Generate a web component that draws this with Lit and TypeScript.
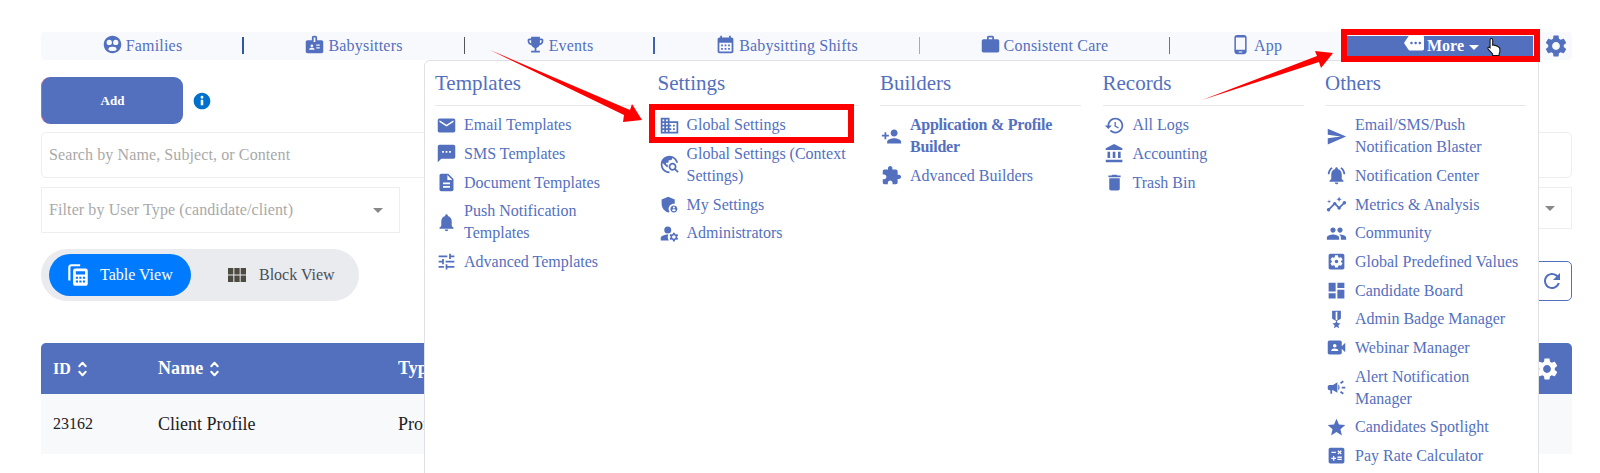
import { LitElement, html, css, svg } from "lit";
import { customElement } from "lit/decorators.js";

const P: Record<string, string> = {
  email: "M20 4H4c-1.1 0-2 .9-2 2v12c0 1.1.9 2 2 2h16c1.1 0 2-.9 2-2V6c0-1.1-.9-2-2-2zm0 4l-8 5-8-5V6l8 5 8-5v2z",
  sms: "M20 2H4c-1.1 0-1.99.9-1.99 2L2 22l4-4h14c1.1 0 2-.9 2-2V4c0-1.1-.9-2-2-2zM9 11H7V9h2v2zm4 0h-2V9h2v2zm4 0h-2V9h2v2z",
  doc: "M14 2H6c-1.1 0-1.99.9-1.99 2L4 20c0 1.1.89 2 1.99 2H18c1.1 0 2-.9 2-2V8l-6-6zm2 16H8v-2h8v2zm0-4H8v-2h8v2zm-3-5V3.5L18.5 9H13z",
  bell: "M12 22c1.1 0 2-.9 2-2h-4c0 1.1.89 2 2 2zm6-6v-5c0-3.07-1.64-5.64-4.5-6.32V4c0-.83-.67-1.5-1.5-1.5s-1.5.67-1.5 1.5v.68C7.63 5.36 6 7.92 6 11v5l-2 2v1h16v-1l-2-2z",
  tune: "M3 17v2h6v-2H3zM3 5v2h10V5H3zm10 16v-2h8v-2h-8v-2h-2v6h2zM7 9v2H3v2h4v2h2V9H7zm14 4v-2H11v2h10zm-6-4h2V7h4V5h-4V3h-2v6z",
  domain: "M12 7V3H2v18h20V7H12zM6 19H4v-2h2v2zm0-4H4v-2h2v2zm0-4H4V9h2v2zm0-4H4V5h2v2zm4 12H8v-2h2v2zm0-4H8v-2h2v2zm0-4H8V9h2v2zm0-4H8V5h2v2zm10 12h-8v-2h2v-2h-2v-2h2v-2h-2V9h8v10zm-2-8h-2v2h2v-2zm0 4h-2v2h2v-2z",
  travel: "M19.3 16.9c.4-.7.7-1.5.7-2.4 0-2.5-2-4.5-4.5-4.5S11 12 11 14.5s2 4.5 4.5 4.5c.9 0 1.7-.3 2.4-.7l3.2 3.2 1.4-1.4-3.2-3.2zm-3.8.1c-1.4 0-2.5-1.1-2.5-2.5s1.1-2.5 2.5-2.5 2.5 1.1 2.5 2.5-1.1 2.5-2.5 2.5zM12 20v2C6.48 22 2 17.52 2 12S6.48 2 12 2c4.84 0 8.87 3.44 9.8 8h-2.07c-.64-2.46-2.4-4.47-4.73-5.41V5c0 1.1-.9 2-2 2h-2v2c0 .55-.45 1-1 1H8v2h2v3H9l-4.79-4.79C4.08 10.79 4 11.38 4 12c0 4.41 3.59 8 8 8z",
  shield: "M17 11c.34 0 .67.04 1 .09V6.27L10.5 3 3 6.27v4.91c0 4.54 3.2 8.79 7.5 9.82.55-.13 1.08-.32 1.6-.55-.69-.98-1.1-2.17-1.1-3.45 0-3.31 2.69-6 6-6zM17 13c-2.21 0-4 1.79-4 4s1.79 4 4 4 4-1.79 4-4-1.79-4-4-4zm0 1.38c.62 0 1.12.51 1.12 1.12s-.51 1.12-1.12 1.12-1.12-.51-1.12-1.12.5-1.12 1.12-1.12zm0 5.37c-.93 0-1.74-.46-2.24-1.17.05-.72 1.51-1.08 2.24-1.08s2.19.36 2.24 1.08c-.5.71-1.31 1.17-2.24 1.17z",
  admins: "M10.67 13.02c-.22-.01-.44-.02-.67-.02-2.42 0-4.68.67-6.61 1.82-.88.52-1.39 1.5-1.39 2.53V20h9.26c-.79-1.13-1.26-2.51-1.26-4 0-1.07.25-2.07.67-2.98zM10 12a4 4 0 1 0 0-8 4 4 0 0 0 0 8zM20.75 16c0-.22-.03-.42-.06-.63l1.14-1.01-1-1.73-1.45.49c-.32-.27-.68-.48-1.08-.63L18 11h-2l-.3 1.49c-.4.15-.76.36-1.08.63l-1.45-.49-1 1.73 1.14 1.01c-.03.21-.06.41-.06.63s.03.42.06.63l-1.14 1.01 1 1.73 1.45-.49c.32.27.68.48 1.08.63L16 21h2l.3-1.49c.4-.15.76-.36 1.08-.63l1.45.49 1-1.73-1.14-1.01c.03-.21.06-.41.06-.63zM17 18c-1.1 0-2-.9-2-2s.9-2 2-2 2 .9 2 2-.9 2-2 2z",
  personAdd: "M15 12c2.21 0 4-1.79 4-4s-1.79-4-4-4-4 1.79-4 4 1.79 4 4 4zm-9-2V7H4v3H1v2h3v3h2v-3h3v-2H6zm9 4c-2.67 0-8 1.34-8 4v2h16v-2c0-2.66-5.33-4-8-4z",
  puzzle: "M20.5 11H19V7c0-1.1-.9-2-2-2h-4V3.5C13 2.12 11.88 1 10.5 1S8 2.12 8 3.5V5H4c-1.1 0-1.99.9-1.99 2v3.8H3.5c1.49 0 2.7 1.21 2.7 2.7s-1.21 2.7-2.7 2.7H2V20c0 1.1.9 2 2 2h3.8v-1.5c0-1.49 1.21-2.7 2.7-2.7 1.49 0 2.7 1.21 2.7 2.7V22H17c1.1 0 2-.9 2-2v-4h1.5c1.38 0 2.5-1.12 2.5-2.5S21.88 11 20.5 11z",
  history: "M13 3c-4.97 0-9 4.03-9 9H1l3.89 3.89.07.14L9 12H6c0-3.87 3.13-7 7-7s7 3.13 7 7-3.13 7-7 7c-1.93 0-3.68-.79-4.94-2.06l-1.42 1.42C8.27 19.99 10.51 21 13 21c4.97 0 9-4.03 9-9s-4.03-9-9-9zm-1 5v5l4.28 2.54.72-1.21-3.5-2.08V8H12z",
  bank: "M4 10v7h3v-7H4zm6 0v7h3v-7h-3zM2 22h19v-3H2v3zm14-12v7h3v-7h-3zm-4.5-9L2 6v2h19V6l-9.5-5z",
  trash: "M6 19c0 1.1.9 2 2 2h8c1.1 0 2-.9 2-2V7H6v12zM19 4h-3.5l-1-1h-5l-1 1H5v2h14V4z",
  send: "M2.01 21L23 12 2.01 3 2 10l15 2-15 2z",
  bellActive: "M7.58 4.08L6.15 2.65C3.75 4.48 2.17 7.3 2.03 10.5h2c.15-2.65 1.51-4.97 3.55-6.42zm12.39 6.42h2c-.15-3.2-1.73-6.02-4.12-7.85l-1.42 1.43c2.02 1.45 3.39 3.77 3.54 6.42zM18 11c0-3.07-1.64-5.64-4.5-6.32V4c0-.83-.67-1.5-1.5-1.5s-1.5.67-1.5 1.5v.68C7.63 5.36 6 7.92 6 11v5l-2 2v1h16v-1l-2-2v-5zm-6 11c.14 0 .27-.01.4-.04.65-.14 1.18-.58 1.44-1.18.1-.24.15-.5.15-.78h-4c.01 1.1.9 2 2.01 2z",
  insights: "M21 8c-1.45 0-2.26 1.44-1.93 2.51l-3.55 3.56c-.3-.09-.74-.09-1.04 0l-2.55-2.55C12.27 10.45 11.46 9 10 9c-1.45 0-2.27 1.44-1.93 2.52l-4.56 4.55C2.44 15.74 1 16.55 1 18c0 1.1.9 2 2 2 1.45 0 2.26-1.44 1.93-2.51l4.55-4.56c.3.09.74.09 1.04 0l2.55 2.55C12.73 16.55 13.54 18 15 18c1.45 0 2.27-1.44 1.93-2.52l3.56-3.55c1.07.33 2.51-.48 2.51-1.93 0-1.1-.9-2-2-2zM15 9l.94-2.07L18 6l-2.06-.93L15 3l-.92 2.07L12 6l2.08.93zM3.5 11L4 9l2-.5L4 8l-.5-2L3 8l-2 .5L3 9z",
  people: "M16 11c1.66 0 2.99-1.34 2.99-3S17.66 5 16 5c-1.66 0-3 1.34-3 3s1.34 3 3 3zm-8 0c1.66 0 2.99-1.34 2.99-3S9.66 5 8 5C6.34 5 5 6.34 5 8s1.34 3 3 3zm0 2c-2.33 0-7 1.17-7 3.5V19h14v-2.5c0-2.33-4.67-3.5-7-3.5zm8 0c-.29 0-.62.02-.97.05 1.16.84 1.97 1.97 1.97 3.45V19h6v-2.5c0-2.33-4.67-3.5-7-3.5z",
  appSettings: "M12 10c-1.1 0-2 .9-2 2s.9 2 2 2 2-.9 2-2-.9-2-2-2zm7-7H5c-1.11 0-2 .9-2 2v14c0 1.1.89 2 2 2h14c1.11 0 2-.9 2-2V5c0-1.1-.89-2-2-2zm-1.75 9c0 .23-.02.46-.05.68l1.48 1.16c.13.11.17.3.08.45l-1.4 2.42c-.09.15-.27.21-.43.15l-1.74-.7c-.36.28-.76.51-1.18.69l-.26 1.85c-.03.17-.18.3-.35.3h-2.8c-.17 0-.32-.13-.35-.29l-.26-1.85c-.43-.18-.82-.41-1.18-.69l-1.74.7c-.16.06-.34 0-.43-.15l-1.4-2.42c-.09-.15-.05-.34.08-.45l1.48-1.16c-.03-.23-.05-.46-.05-.69 0-.23.02-.46.05-.68l-1.48-1.16c-.13-.11-.17-.3-.08-.45l1.4-2.42c.09-.15.27-.21.43-.15l1.74.7c.36-.28.76-.51 1.18-.69l.26-1.85c.03-.17.18-.3.35-.3h2.8c.17 0 .32.13.35.29l.26 1.85c.43.18.82.41 1.18.69l1.74-.7c.16-.06.34 0 .43.15l1.4 2.42c.09.15.05.34-.08.45l-1.48 1.16c.03.23.05.46.05.69z",
  dash: "M3 13h8V3H3v10zm0 8h8v-6H3v6zm10 0h8V11h-8v10zm0-18v6h8V3h-8z",
  medal: "M17 10.43V2H7v8.43c0 .35.18.68.49.86l4.18 2.51-.99 2.34-3.41.29 2.59 2.24L9.07 22 12 20.23 14.93 22l-.78-3.33 2.59-2.24-3.41-.29-.99-2.34 4.18-2.51c.3-.18.48-.5.48-.86zm-4 1.8l-1 .6-1-.6V3h2v9.23z",
  video: "M18 10.48V6c0-1.1-.9-2-2-2H4c-1.1 0-2 .9-2 2v12c0 1.1.9 2 2 2h12c1.1 0 2-.9 2-2v-4.48l4 3.98v-11l-4 3.98zM10 8c1.1 0 2 .9 2 2s-.9 2-2 2-2-.9-2-2 .9-2 2-2zm4 8H6v-.57c0-.81.48-1.53 1.22-1.85.85-.37 1.79-.58 2.78-.58.99 0 1.93.21 2.78.58.74.32 1.22 1.04 1.22 1.85V16z",
  campaign: "M18 11v2h4v-2h-4zm-2 6.61c.96.71 2.21 1.65 3.2 2.39.4-.53.8-1.07 1.2-1.6-.99-.74-2.24-1.68-3.2-2.4-.4.54-.8 1.08-1.2 1.61zM20.4 5.6c-.4-.53-.8-1.07-1.2-1.6-.99.74-2.24 1.68-3.2 2.4.4.53.8 1.07 1.2 1.6.96-.72 2.21-1.65 3.2-2.4zM4 9c-1.1 0-2 .9-2 2v2c0 1.1.9 2 2 2h1v4h2v-4h1l5 3V6L8 9H4zm11.5 3c0-1.33-.58-2.53-1.5-3.35v6.69c.92-.81 1.5-2.01 1.5-3.34z",
  star: "M12 17.27L18.18 21l-1.64-7.03L22 9.24l-7.19-.61L12 2 9.19 8.63 2 9.24l5.46 4.73L5.82 21z",
  calc: "M19 3H5c-1.1 0-2 .9-2 2v14c0 1.1.9 2 2 2h14c1.1 0 2-.9 2-2V5c0-1.1-.9-2-2-2zm-5.97 4.06L14.09 6l1.41 1.41L16.91 6l1.06 1.06-1.41 1.41 1.41 1.41-1.06 1.06-1.41-1.4-1.41 1.41-1.06-1.06 1.41-1.41-1.41-1.42zm-6.78.66h5v1.5h-5v-1.5zM11.5 16h-2v2H8v-2H6v-1.5h2v-2h1.5v2h2V16zm6.5 1.25h-5v-1.5h5v1.5zm0-2.5h-5v-1.5h5v1.5z",
  face: "M12 2C6.48 2 2 6.48 2 12s4.48 10 10 10 10-4.48 10-10S17.52 2 12 2zM8.300 6.600a3 3 0 1 1 0 6 3 3 0 1 1 0-6zm7.400 0a3 3 0 1 1 0 6 3 3 0 1 1 0-6zM7.300 17.300a4.700 2.800 0 0 1 9.400 0 4.700 2 0 0 1-9.400 0z",
  badge: "M20 7h-5V4c0-1.1-.9-2-2-2h-2c-1.1 0-2 .9-2 2v3H4c-1.1 0-2 .9-2 2v11c0 1.1.9 2 2 2h16c1.1 0 2-.9 2-2V9c0-1.1-.9-2-2-2zM9 12c.83 0 1.5.67 1.5 1.500S9.830 15 9 15s-1.500-.67-1.500-1.500S8.170 12 9 12zm3 6H6v-.75c0-1 2-1.500 3-1.500s3 .5 3 1.500V18zm1-9h-2V4h2v5zm5 7.500h-4V15h4v1.500zm0-3h-4V12h4v1.500z",
  trophy: "M19 5h-2V3H7v2H5c-1.100 0-2 .9-2 2v1c0 2.550 1.920 4.630 4.390 4.940.630 1.500 1.980 2.630 3.610 2.960V19H7v2h10v-2h-4v-3.100c1.630-.33 2.980-1.460 3.610-2.960C19.080 12.630 21 10.550 21 8V7c0-1.100-.9-2-2-2zM5 8V7h2v3.820C5.840 10.400 5 9.300 5 8zm14 0c0 1.300-.84 2.400-2 2.820V7h2v1z",
  calendar: "M19 4h-1V2h-2v2H8V2H6v2H5c-1.100 0-2 .9-2 2v14c0 1.100.9 2 2 2h14c1.100 0 2-.9 2-2V6c0-1.100-.9-2-2-2zm0 16H5V10h14v10zM9 14H7v-2h2v2zm4 0h-2v-2h2v2zm4 0h-2v-2h2v2zm-8 4H7v-2h2v2zm4 0h-2v-2h2v2zm4 0h-2v-2h2v2z",
  work: "M20 6h-4V4c0-1.110-.89-2-2-2h-4c-1.110 0-2 .89-2 2v2H4c-1.110 0-1.990.89-1.990 2L2 19c0 1.110.89 2 2 2h16c1.110 0 2-.89 2-2V8c0-1.110-.89-2-2-2zm-6 0h-4V4h4v2z",
  phone: "M16 1H8C6.340 1 5 2.340 5 4v16c0 1.660 1.340 3 3 3h8c1.660 0 3-1.340 3-3V4c0-1.660-1.340-3-3-3zm-2 20h-4v-1h4v1zm3.250-3H6.750V4h10.500v14z",
  more: "M22 3H7c-.69 0-1.230.35-1.590.88L0 12l5.410 8.110c.36.53.9.89 1.590.89h15c1.100 0 2-.9 2-2V5c0-1.100-.9-2-2-2zM9 13.500c-.83 0-1.500-.67-1.500-1.500s.67-1.500 1.500-1.500 1.500.67 1.500 1.500-.67 1.500-1.500 1.500zm5 0c-.83 0-1.500-.67-1.500-1.500s.67-1.500 1.500-1.500 1.500.67 1.500 1.500-.67 1.500-1.500 1.500zm5 0c-.83 0-1.500-.67-1.500-1.500s.67-1.500 1.500-1.500 1.500.67 1.500 1.500-.67 1.500-1.500 1.500z",
  gear: "M19.140 12.940c.04-.3.06-.61.06-.94 0-.32-.02-.64-.07-.94l2.030-1.580c.18-.14.23-.41.12-.61l-1.920-3.320c-.12-.22-.37-.29-.59-.22l-2.390.96c-.5-.38-1.030-.7-1.620-.94l-.36-2.540c-.04-.24-.24-.41-.48-.41h-3.840c-.24 0-.43.17-.47.41l-.36 2.540c-.59.24-1.130.57-1.620.94l-2.390-.96c-.22-.08-.47 0-.59.22L2.740 8.870c-.12.21-.08.47.12.61l2.030 1.580c-.05.3-.09.63-.09.94s.02.64.07.94l-2.030 1.580c-.18.14-.23.41-.12.61l1.920 3.320c.12.22.37.29.59.22l2.390-.96c.5.38 1.030.7 1.620.94l.36 2.540c.05.24.24.41.48.41h3.840c.24 0 .44-.17.47-.41l.36-2.540c.59-.24 1.130-.56 1.620-.94l2.390.96c.22.08.47 0 .59-.22l1.920-3.320c.12-.22.07-.47-.12-.61l-2.010-1.580zM12 15.600c-1.980 0-3.600-1.620-3.600-3.600s1.620-3.600 3.600-3.600 3.600 1.620 3.600 3.600-1.620 3.600-3.600 3.600z",
  refresh: "M17.650 6.350C16.200 4.900 14.210 4 12 4c-4.420 0-7.990 3.580-7.990 8s3.570 8 7.990 8c3.730 0 6.840-2.550 7.730-6h-2.080c-.82 2.330-3.040 4-5.650 4-3.310 0-6-2.690-6-6s2.690-6 6-6c1.660 0 3.140.69 4.220 1.780L13 11h7V4l-2.350 2.350z",
  info: "M12 2C6.480 2 2 6.480 2 12s4.480 10 10 10 10-4.480 10-10S17.520 2 12 2zm1.500 15h-3v-6.500h3V17zM12 9.200a1.700 1.700 0 1 1 0-3.400 1.700 1.700 0 0 1 0 3.400z",
  tableView: "M6 2h8v2H6a1 1 0 0 0-1 1v12H3V5a3 3 0 0 1 3-3zM9.500 6H19a2 2 0 0 1 2 2v12a2 2 0 0 1-2 2H9.500a2 2 0 0 1-2-2V8a2 2 0 0 1 2-2zm.5 2.500v3h8.500v-3H10zM10 13.500v2h2v-2h-2zm3.250 0v2h2v-2h-2zm3.250 0v2h2v-2h-2zM10 17v2h2v-2h-2zm3.250 0v2h2v-2h-2zm3.250 0v2h2v-2h-2z",
  blocks: "M14.670 5v6.500H9.330V5h5.340zm1 6.500H21V5h-5.330v6.500zm-1 7.500v-6.500H9.330V19h5.340zm1-6.500V19H21v-6.500h-5.330zm-7.340 0H3V19h5.330v-6.500zm0-1V5H3v6.500h5.330z",
};

const icon = (name: string, cls = "") =>
  html`<svg class="ic ${cls}" viewBox="0 0 24 24" fill="currentColor"><path d=${P[name]}></path></svg>`;

const NAV = [
  { label: "Families", icon: "face", sep: "s1" },
  { label: "Babysitters", icon: "badge", sep: "s2" },
  { label: "Events", icon: "trophy", sep: "s3" },
  { label: "Babysitting Shifts", icon: "calendar", sep: "s4" },
  { label: "Consistent Care", icon: "work", sep: "s5" },
  { label: "App", icon: "phone", sep: "s6" },
];

type Item = [string, string, boolean?];
const COLS: { title: string; items: Item[] }[] = [
  { title: "Templates", items: [["email", "Email Templates"], ["sms", "SMS Templates"], ["doc", "Document Templates"], ["bell", "Push Notification Templates"], ["tune", "Advanced Templates"]] },
  { title: "Settings", items: [["domain", "Global Settings"], ["travel", "Global Settings (Context Settings)"], ["shield", "My Settings"], ["admins", "Administrators"]] },
  { title: "Builders", items: [["personAdd", "Application & Profile Builder", true], ["puzzle", "Advanced Builders"]] },
  { title: "Records", items: [["history", "All Logs"], ["bank", "Accounting"], ["trash", "Trash Bin"]] },
  { title: "Others", items: [["send", "Email/SMS/Push Notification Blaster"], ["bellActive", "Notification Center"], ["insights", "Metrics & Analysis"], ["people", "Community"], ["appSettings", "Global Predefined Values"], ["dash", "Candidate Board"], ["medal", "Admin Badge Manager"], ["video", "Webinar Manager"], ["campaign", "Alert Notification Manager"], ["star", "Candidates Spotlight"], ["calc", "Pay Rate Calculator"]] },
];

const sortArrows = html`<svg class="sort" viewBox="0 0 12 20" fill="none" stroke="currentColor" stroke-width="2.2" stroke-linecap="round" stroke-linejoin="round"><path d="M2.500 7 6 3.200 9.500 7M2.500 13 6 16.800 9.500 13"></path></svg>`;

@customElement("app-root")
export class AppRoot extends LitElement {
  static styles = css`
    :host {
      display: block;
      position: relative;
      width: 1600px;
      height: 473px;
      overflow: hidden;
      background: #fff;
      font-family: "Liberation Serif", serif;
      font-size: 16px;
      color: #5370bf;
    }
    .page {
      display: flex;
      flex-direction: column;
      padding: 32px 28px 0 41px;
    }
    .ic { display: block; flex: none; width: 18px; height: 18px; }

    .nav {
      display: grid;
      grid-template-columns: 202px 221px 190px 265px 250px 177px 187px 39px;
      height: 28px;
      background: #f8f9fc;
      border-radius: 4px;
      align-items: center;
    }
    .nav-item {
      position: relative;
      height: 100%;
      display: flex;
      align-items: center;
      justify-content: center;
      gap: 3px;
      letter-spacing: 0.2px;
    }
    .nav-item .ic { width: 21px; height: 21px; margin-top: -3px; }
    .nav-item::after {
      content: "";
      position: absolute;
      right: -1px;
      top: 5px;
      height: 17px;
    }
    .s1::after { border-right: 2px solid #2f55a4; }
    .s2::after { border-right: 1px solid #555; }
    .s3::after { border-right: 2px solid #3f62b0; }
    .s4::after { border-right: 1px solid #aaa; }
    .s5::after { border-right: 1px solid #4f78c4; }
    .s6 { padding-right: 3px; box-sizing: border-box; }
    .nav-more {
      height: 21px;
      background: #5370bf;
      color: #fff;
      font-weight: 700;
      display: flex;
      align-items: center;
      padding-left: 58px;
    }
    .nav-more .more-ic { width: 20px; height: 20px; margin: -6px 3px 0 0; }
    .caret-w { width: 0; height: 0; border-left: 5px solid transparent; border-right: 5px solid transparent; border-top: 5px solid #fff; margin: 2px 0 0 5px; }
    .hand { flex: none; width: 17px; height: 20px; margin: 2px 0 0 7px; }
    .nav-gear { display: flex; justify-content: center; padding-left: 7px; }
    .nav-gear .ic { width: 26px; height: 26px; }

    .add-row { display: flex; align-items: center; gap: 9px; margin-top: 17px; }
    .add {
      width: 142px;
      height: 47px;
      display: flex;
      align-items: center;
      justify-content: center;
      box-sizing: border-box;
      border-radius: 9px;
      background: #5370bf;
      border-left: 1px solid #d8628a;
      color: #fff;
      font-weight: 700;
      font-size: 13px;
    }
    .info { width: 20px; height: 20px; color: #0070cc; }

    .search {
      margin-top: 8px;
      height: 46px;
      box-sizing: border-box;
      border: 1px solid #eceef1;
      border-radius: 5px;
      display: flex;
      align-items: center;
      padding-left: 7px;
      color: #a9a9a9;
      letter-spacing: 0.1px;
    }
    .filters { display: flex; justify-content: space-between; align-items: flex-start; margin-top: 9px; }
    .select {
      width: 359px;
      height: 46px;
      box-sizing: border-box;
      border: 1px solid #eceef1;
      display: flex;
      align-items: center;
      justify-content: space-between;
      padding: 0 16px 0 7px;
      color: #a9a9a9;
      letter-spacing: 0.1px;
    }
    .select.short { height: 42px; }
    .caret-g { width: 0; height: 0; border-left: 5px solid transparent; border-right: 5px solid transparent; border-top: 5px solid #888; }

    .tools { display: flex; justify-content: space-between; align-items: flex-end; margin-top: 16px; }
    .toggle {
      width: 318px;
      height: 52px;
      box-sizing: border-box;
      border-radius: 26px;
      background: #e9ebef;
      display: flex;
      align-items: center;
      padding-left: 8px;
    }
    .tab {
      flex: none;
      display: flex;
      align-items: center;
      height: 42px;
      box-sizing: border-box;
      color: #4a4f57;
    }
    .tab .ic { width: 24px; height: 24px; }
    .tab.on {
      width: 142px;
      border-radius: 21px;
      padding-left: 16px;
      gap: 9px;
      background: #007bff;
      color: #fff;
    }
    .tab.on .ic { width: 26px; height: 26px; }
    .tab.off { margin-left: 34px; gap: 10px; }
    .tab.off .ic { color: #4d4a42; }
    .refresh {
      width: 40px;
      height: 40px;
      box-sizing: border-box;
      border: 1px solid #5370bf;
      border-radius: 5px;
      display: flex;
      align-items: center;
      justify-content: center;
    }
    .refresh .ic { width: 24px; height: 24px; }

    .table { margin-top: 42px; }
    .thead, .trow {
      display: grid;
      grid-template-columns: 105px 240px 1fr auto;
      align-items: center;
      padding: 0 12px 0 12px;
    }
    .thead {
      height: 51px;
      background: #5370bf;
      border-radius: 5px 5px 0 0;
      color: #fff;
      font-weight: 700;
    }
    .th { display: flex; align-items: center; gap: 6px; }
    .th.big { font-size: 18px; letter-spacing: 0.1px; }
    .sort { width: 11px; height: 20px; }
    .thead .ic { width: 26px; height: 26px; }
    .trow { height: 60px; background: #f8f9fb; color: #222; }
    .cell-big { font-size: 18px; }

    .drop {
      position: absolute;
      left: 424px;
      top: 60px;
      width: 1115px;
      height: 430px;
      box-sizing: border-box;
      background: #fff;
      border: 1px solid #dfe1e6;
      border-radius: 6px 0 0 0;
      padding: 9px 11px 0 10px;
      display: grid;
      grid-template-columns: repeat(5, 201px);
      column-gap: 21.5px;
    }
    .col h4 {
      margin: 0 0 5px;
      font-weight: 400;
      font-size: 21px;
      line-height: 26px;
      height: 35px;
      border-bottom: 1px solid #e6e8ec;
    }
    .item {
      display: flex;
      align-items: center;
      gap: 7px;
      padding: 3.33px 0 3.33px 1px;
      line-height: 22px;
    }
    .col:nth-child(n + 3) .item { gap: 8px; }
    .item .ic { width: 21px; height: 21px; }
    .item span { flex: 1; }
    .item.bold { font-weight: 700; letter-spacing: -0.25px; }

    .mark {
      position: absolute;
      left: 649px;
      top: 104px;
      width: 205px;
      height: 39px;
      box-sizing: border-box;
      border: 6px solid #ff0000;
      pointer-events: none;
    }
    .mark.more-mark {
      left: 1341px;
      top: 29px;
      width: 199px;
      height: 33px;
    }
    .arrows { position: absolute; left: 0; top: 0; width: 1600px; height: 473px; pointer-events: none; }
  `;

  render() {
    return html`
      <div class="page">
        <div class="nav">
          ${NAV.map((n) => html`<div class="nav-item ${n.sep}">${icon(n.icon)}<span>${n.label}</span></div>`)}
          <div class="nav-more">
            ${icon("more", "more-ic")}<span>More</span><i class="caret-w"></i>
            <svg class="hand" viewBox="0 0 16 19"><path d="M5 1.500c.8 0 1.300.6 1.300 1.300v5l.7-.2c.5-.1 1 .1 1.200.5.5-.3 1.200-.1 1.500.4.500-.3 1.200 0 1.400.5l1.400 1c.5.4.6 1 .6 1.600v2.400c0 .8-.3 1.300-.7 2v1.500H6.200v-1.500L2 11.500c-.4-.6-.4-1.200 0-1.600.5-.4 1.100-.3 1.600.1l.2.2V2.800c0-.7.500-1.300 1.200-1.300z" fill="#fff" stroke="#111" stroke-width="1"></path></svg>
          </div>
          <div class="nav-gear">${icon("gear")}</div>
        </div>

        <div class="add-row"><div class="add">Add</div>${icon("info", "info")}</div>
        <div class="search">Search by Name, Subject, or Content</div>
        <div class="filters">
          <div class="select"><span>Filter by User Type (candidate/client)</span><i class="caret-g"></i></div>
          <div class="select short"><span></span><i class="caret-g"></i></div>
        </div>
        <div class="tools">
          <div class="toggle">
            <div class="tab on">${icon("tableView")}<span>Table View</span></div>
            <div class="tab off">${icon("blocks")}<span>Block View</span></div>
          </div>
          <div class="refresh">${icon("refresh")}</div>
        </div>
        <div class="table">
          <div class="thead">
            <div class="th">ID ${sortArrows}</div>
            <div class="th big">Name ${sortArrows}</div>
            <div class="th big">Type</div>
            ${icon("gear")}
          </div>
          <div class="trow"><div>23162</div><div class="cell-big">Client Profile</div><div class="cell-big">Profile</div><div></div></div>
        </div>
      </div>

      <div class="drop">
        ${COLS.map((c) => html`
          <div class="col">
            <h4>${c.title}</h4>
            ${c.items.map(([ic, label, bold]) => html`<div class="item ${bold ? "bold" : ""}">${icon(ic)}<span>${label}</span></div>`)}
          </div>`)}
      </div>

      <div class="mark"></div>
      <div class="mark more-mark"></div>
      <svg class="arrows" viewBox="0 0 1600 473">
        ${svg`<polygon fill="#ff0000" points="490,50 630,110 632,104 642,120 623,122 624,115"></polygon>
        <polygon fill="#ff0000" points="1202,100 1317,56 1315,51 1333,53 1321,68 1319,62"></polygon>`}
      </svg>
    `;
  }
}
